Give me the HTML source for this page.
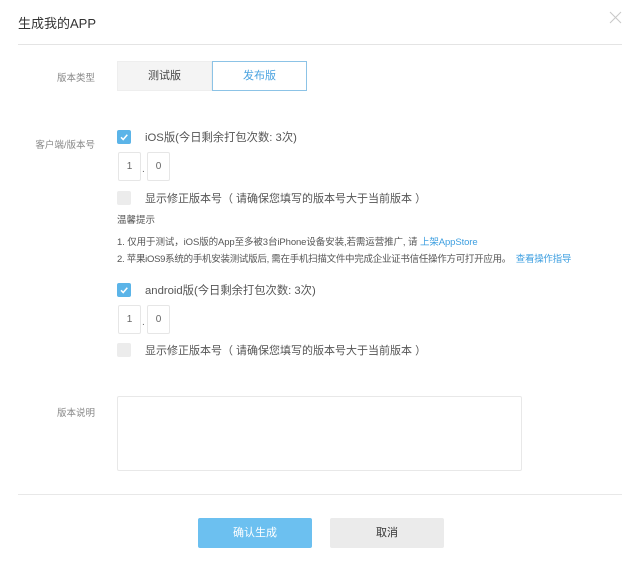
<!DOCTYPE html>
<html><head><meta charset="utf-8"><style>
*{margin:0;padding:0;box-sizing:border-box}
body{width:640px;height:569px;background:#fff;font-family:"Liberation Sans","Noto Sans CJK SC",sans-serif;color:#333;position:relative;overflow:hidden}
.a{position:absolute;white-space:nowrap}
.lbl{font-size:9.5px;color:#888;text-align:right;width:95px;left:0}
.cb{position:absolute;width:14px;height:14px;border-radius:2px}
.cb.on{background:#5bb4e8}
.cb.off{background:#ececec}
.inp{position:absolute;width:23px;height:29px;border:1px solid #e6e6e6;border-radius:2px;font-size:10px;color:#666;text-align:center;line-height:27px}
.t{font-size:11.3px;color:#555}
.s{font-size:9.5px;color:#555}
.blue{color:#3e9fe0}
</style></head><body>
<div class="a" style="left:18px;top:13px;font-size:13px;color:#333">生成我的APP</div>
<svg class="a" style="left:609px;top:11px" width="13" height="13"><path d="M1 1L12 12M12 1L1 12" stroke="#c8c8c8" stroke-width="1"/></svg>
<div class="a" style="left:18px;top:44px;width:604px;height:1px;background:#e4e4e4"></div>

<div class="a lbl" style="top:70px">版本类型</div>
<div class="a" style="left:117px;top:61px;width:95px;height:30px;background:#f4f4f4;border:1px solid #eee;font-size:11px;text-align:center;line-height:28px;color:#444">测试版</div>
<div class="a" style="left:212px;top:61px;width:95px;height:30px;border:1px solid #8cc3e6;font-size:11px;text-align:center;line-height:28px;color:#4aa3e0">发布版</div>

<div class="a lbl" style="top:137px">客户端/版本号</div>
<div class="cb on" style="left:117px;top:130px"><svg width="14" height="14"><path d="M4 7.3L6.2 9.5L10.3 4.8" stroke="#fff" stroke-width="1.5" fill="none"/></svg></div>
<div class="a t" style="left:145px;top:129px">iOS版(今日剩余打包次数: 3次)</div>
<div class="inp" style="left:118px;top:152px">1</div>
<div class="a" style="left:142px;top:164px;font-size:10px;color:#666">.</div>
<div class="inp" style="left:147px;top:152px">0</div>
<div class="cb off" style="left:117px;top:191px"></div>
<div class="a t" style="left:145px;top:190px;font-size:11px">显示修正版本号（ 请确保您填写的版本号大于当前版本 ）</div>
<div class="a s" style="left:117px;top:212px">温馨提示</div>
<div class="a s" style="left:117px;top:234px;letter-spacing:-0.1px">1. 仅用于测试，iOS版的App至多被3台iPhone设备安装,若需运营推广, 请 <span class="blue">上架AppStore</span></div>
<div class="a s" style="left:117px;top:251px;letter-spacing:-0.28px">2. 苹果iOS9系统的手机安装测试版后, 需在手机扫描文件中完成企业证书信任操作方可打开应用。 <span class="blue">&nbsp;查看操作指导</span></div>

<div class="cb on" style="left:117px;top:283px"><svg width="14" height="14"><path d="M4 7.3L6.2 9.5L10.3 4.8" stroke="#fff" stroke-width="1.5" fill="none"/></svg></div>
<div class="a t" style="left:145px;top:282px">android版(今日剩余打包次数: 3次)</div>
<div class="inp" style="left:118px;top:305px">1</div>
<div class="a" style="left:142px;top:317px;font-size:10px;color:#666">.</div>
<div class="inp" style="left:147px;top:305px">0</div>
<div class="cb off" style="left:117px;top:343px"></div>
<div class="a t" style="left:145px;top:342px;font-size:11px">显示修正版本号（ 请确保您填写的版本号大于当前版本 ）</div>

<div class="a lbl" style="top:405px">版本说明</div>
<div class="a" style="left:117px;top:396px;width:405px;height:75px;border:1px solid #e8e8e8;border-radius:2px"></div>

<div class="a" style="left:18px;top:494px;width:604px;height:1px;background:#e8e8e8"></div>
<div class="a" style="left:198px;top:518px;width:114px;height:30px;background:#6cc0f0;border-radius:2px;color:#fff;font-size:11px;text-align:center;line-height:30px">确认生成</div>
<div class="a" style="left:330px;top:518px;width:114px;height:30px;background:#ebebeb;border-radius:2px;color:#333;font-size:11px;text-align:center;line-height:30px">取消</div>
</body></html>
